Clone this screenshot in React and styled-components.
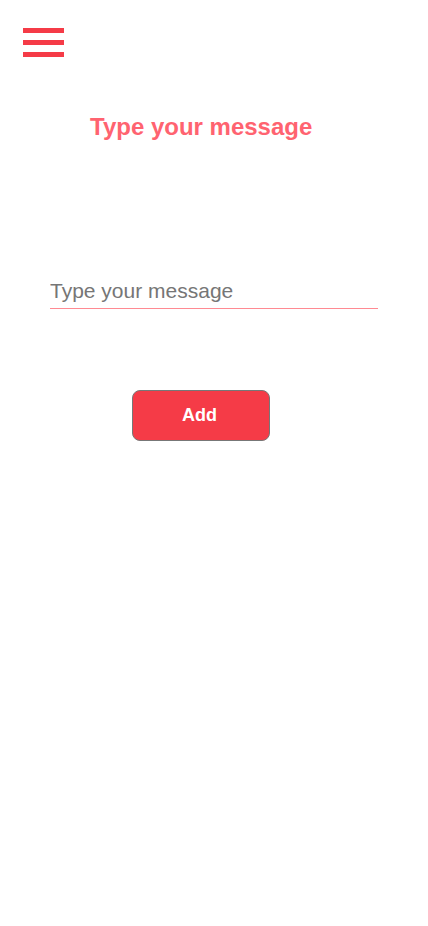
import React from "react";
import styled, { createGlobalStyle } from "styled-components";

const Global = createGlobalStyle`
  html, body { margin: 0; padding: 0; background: #fff; }
  body { font-family: "Liberation Sans", Arial, sans-serif; }
`;

const Page = styled.div`
  width: 428px;
  min-height: 926px;
  display: flex;
  flex-direction: column;
`;

const MenuButton = styled.button`
  margin: 28px 0 0 23px;
  padding: 0;
  width: 41px;
  height: 29px;
  border: none;
  background: transparent;
  display: flex;
  flex-direction: column;
  justify-content: space-between;
`;

const Bar = styled.span`
  display: block;
  width: 41px;
  height: 5px;
  background: #f53b47;
`;

const Title = styled.h1`
  margin: 56px 0 0 90px;
  font-size: 24px;
  font-weight: 700;
  color: #ff6370;
  line-height: 28px;
`;

const Field = styled.input`
  margin: 136px 0 0 50px;
  width: 328px;
  height: 32px;
  box-sizing: border-box;
  border: none;
  border-bottom: 1.5px solid #ff8a92;
  outline: none;
  padding: 0 0 3px 0;
  font-family: "Liberation Sans", Arial, sans-serif;
  font-size: 21px;
  color: #333;
  &::placeholder { color: #767676; }
`;

const AddButton = styled.button`
  margin: 81px 0 0 132px;
  padding: 0 3px 0 0;
  width: 138px;
  height: 51px;
  border: 1px solid #777;
  border-radius: 8px;
  background: #f53b47;
  color: #fff;
  font-family: "Liberation Sans", Arial, sans-serif;
  font-weight: 700;
  font-size: 18px;
`;

export default function App() {
  return (
    <Page>
      <Global />
      <MenuButton aria-label="menu">
        <Bar />
        <Bar />
        <Bar />
      </MenuButton>
      <Title>Type your message</Title>
      <Field placeholder="Type your message" />
      <AddButton>Add</AddButton>
    </Page>
  );
}
